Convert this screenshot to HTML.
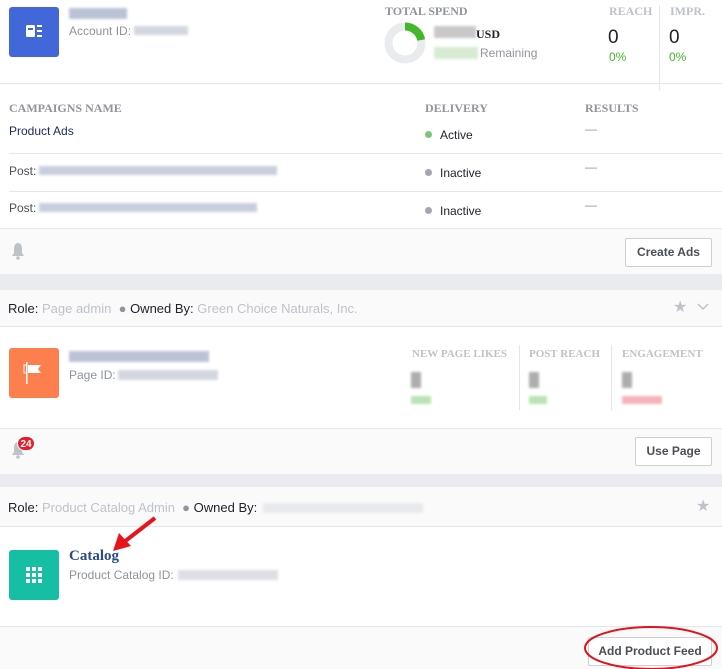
<!DOCTYPE html>
<html><head><meta charset="utf-8"><style>
*{margin:0;padding:0;box-sizing:border-box}
body{width:722px;height:669px;position:relative;background:#fff;font-family:"Liberation Sans",sans-serif;overflow:hidden;color:#4b4f56}
.a{position:absolute;white-space:nowrap}
.serif{font-family:"Liberation Serif",serif;font-weight:bold;font-size:12px;color:#90949c}
.line{position:absolute;height:1px;background:#e5e6e9}
.blur{position:absolute;background:#c9cdd8;filter:blur(1.2px);opacity:.8}
.btn{position:absolute;border:1px solid #ccd0d5;border-radius:2px;background:#fff;font-size:12px;font-weight:bold;color:#4b4f56;text-align:center;line-height:27px}
.dot{display:inline-block;width:7px;height:7px;border-radius:50%;margin-right:8px;vertical-align:1px}
.sm{font-size:12px}
.g{color:#90949c}
</style></head><body>
<!-- card 1 top -->
<div class="a" style="left:9px;top:7px;width:50px;height:50px;background:#4267d9;border-radius:3px">
<svg width="50" height="50"><rect x="17" y="18" width="9" height="12" rx="1.5" fill="#fff"/><rect x="19" y="21" width="5" height="2" fill="#4267d9"/><rect x="28" y="18" width="5" height="2" fill="#fff"/><rect x="28" y="23" width="5" height="2" fill="#fff"/><rect x="28" y="28" width="5" height="2" fill="#fff"/></svg></div>
<div class="blur" style="left:69px;top:8px;width:58px;height:11px;background:#aab4cc"></div>
<div class="a sm g" style="left:69px;top:24px;font-size:12px;color:#8d949e">Account ID:</div>
<div class="blur" style="left:134px;top:26px;width:54px;height:9px"></div>
<div class="a serif" style="left:385px;top:4px">TOTAL SPEND</div>
<svg class="a" style="left:384px;top:22px" width="42" height="42"><circle cx="21" cy="21" r="16.5" fill="none" stroke="#e9ebee" stroke-width="8"/><path d="M21 4.5 A16.5 16.5 0 0 1 37.2 18" fill="none" stroke="#42b72a" stroke-width="8"/></svg>
<div class="blur" style="left:434px;top:26px;width:42px;height:12px;background:#bbb"></div>
<div class="a" style="left:476px;top:27px;font-family:'Liberation Serif',serif;font-weight:bold;font-size:12px;color:#1d2129">USD</div>
<div class="blur" style="left:434px;top:47px;width:44px;height:12px;background:#cfe8c8"></div>
<div class="a" style="left:480px;top:46px;font-size:12px;color:#90949c">Remaining</div>
<div class="a serif" style="left:609px;top:4px;color:#bec3c9">REACH</div>
<div class="a serif" style="left:670px;top:4px;color:#bec3c9">IMPR.</div>
<div class="a" style="left:608px;top:27px;font-size:19px;color:#1d2129">0</div>
<div class="a" style="left:669px;top:27px;font-size:19px;color:#1d2129">0</div>
<div class="a" style="left:609px;top:50px;font-size:12px;color:#42b72a">0%</div>
<div class="a" style="left:669px;top:50px;font-size:12px;color:#42b72a">0%</div>
<div class="a" style="left:659px;top:5px;width:1px;height:85px;background:#e5e6e9"></div>
<div class="line" style="left:0;top:114px;width:722px;top:114px;display:none"></div>
<div class="line" style="left:0;top:114px"></div>
<div class="line" style="left:0;top:83px;width:722px"></div>
<!-- campaigns -->
<div class="a serif" style="left:9px;top:101px">CAMPAIGNS NAME</div>
<div class="a serif" style="left:425px;top:101px">DELIVERY</div>
<div class="a serif" style="left:585px;top:101px">RESULTS</div>
<div class="a sm" style="left:9px;top:124px;color:#1c2a5c">Product Ads</div>
<div class="a sm" style="left:425px;top:128px;color:#1d2129"><span class="dot" style="background:#7ac776"></span>Active</div>
<div class="a sm" style="left:585px;top:122px;color:#90949c">—</div>
<div class="line" style="left:9px;top:153px;width:713px"></div>
<div class="a sm" style="left:9px;top:164px;color:#4b4f56">Post:</div>
<div class="blur" style="left:39px;top:166px;width:238px;height:9px;background:#bcc3d6"></div>
<div class="a sm" style="left:425px;top:166px;color:#1d2129"><span class="dot" style="background:#a2a6b0"></span>Inactive</div>
<div class="a sm" style="left:585px;top:160px;color:#90949c">—</div>
<div class="line" style="left:9px;top:191px;width:713px"></div>
<div class="a sm" style="left:9px;top:201px;color:#4b4f56">Post:</div>
<div class="blur" style="left:39px;top:203px;width:218px;height:9px;background:#bcc3d6"></div>
<div class="a sm" style="left:425px;top:204px;color:#1d2129"><span class="dot" style="background:#a2a6b0"></span>Inactive</div>
<div class="a sm" style="left:585px;top:198px;color:#90949c">—</div>
<div class="a" style="left:0;top:228px;width:722px;height:46px;background:#fafafa;border-top:1px solid #e5e6e9"></div>
<svg class="a" style="left:10px;top:242px" width="16" height="18"><path d="M8 1C5 1 4 4 4 7v4L2 14h12l-2-3V7c0-3-1-6-4-6z" fill="#bec2c9"/><circle cx="8" cy="16" r="1.8" fill="#bec2c9"/></svg>
<div class="btn" style="left:625px;top:238px;width:87px;height:29px">Create Ads</div>
<div class="a" style="left:0;top:274px;width:722px;height:16px;background:#e9ebee"></div>
<!-- card 2 -->
<div class="a" style="left:0;top:290px;width:722px;height:37px;background:#fafafa;border-bottom:1px solid #e5e6e9"></div>
<div class="a" style="left:8px;top:301px;font-size:13px;color:#1d2129">Role: <span style="color:#bec3c9">Page admin</span> &nbsp;<span style="color:#90949c">●</span> Owned By: <span style="color:#bec3c9">Green Choice Naturals, Inc.</span></div>
<div class="a" style="left:673px;top:297px;font-size:16px;color:#bec3c9">★</div>
<svg class="a" style="left:697px;top:303px" width="12" height="8"><path d="M1 1l5 5 5-5" fill="none" stroke="#bec3c9" stroke-width="1.5"/></svg>
<div class="a" style="left:9px;top:348px;width:50px;height:50px;background:#fe7f4e;border-radius:3px">
<svg width="50" height="50"><rect x="17" y="14" width="1.5" height="22" fill="#fff"/><path d="M19 17h13l-3 4 3 4H19z" fill="#fff"/><rect x="15" y="17" width="3" height="8" fill="none" stroke="#fff" stroke-width="1"/></svg></div>
<div class="blur" style="left:69px;top:351px;width:140px;height:11px;background:#aab4cc"></div>
<div class="a sm" style="left:69px;top:368px;color:#8d949e">Page ID:</div>
<div class="blur" style="left:118px;top:370px;width:100px;height:10px"></div>
<div class="a serif" style="left:412px;top:348px;color:#bec3c9;font-size:11px">NEW PAGE LIKES</div>
<div class="a serif" style="left:529px;top:348px;color:#bec3c9;font-size:11px">POST REACH</div>
<div class="a serif" style="left:622px;top:348px;color:#bec3c9;font-size:11px">ENGAGEMENT</div>
<div class="a" style="left:519px;top:345px;width:1px;height:65px;background:#e5e6e9"></div>
<div class="a" style="left:611px;top:345px;width:1px;height:65px;background:#e5e6e9"></div>
<div class="blur" style="left:411px;top:372px;width:10px;height:16px;background:#999"></div>
<div class="blur" style="left:411px;top:396px;width:20px;height:8px;background:#a9dca0"></div>
<div class="blur" style="left:529px;top:372px;width:10px;height:16px;background:#999"></div>
<div class="blur" style="left:529px;top:396px;width:18px;height:8px;background:#a9dca0"></div>
<div class="blur" style="left:622px;top:372px;width:10px;height:16px;background:#999"></div>
<div class="blur" style="left:622px;top:396px;width:40px;height:8px;background:#f3a0a8"></div>
<div class="a" style="left:0;top:428px;width:722px;height:46px;background:#fafafa;border-top:1px solid #e5e6e9"></div>
<svg class="a" style="left:10px;top:441px" width="16" height="18"><path d="M8 1C5 1 4 4 4 7v4L2 14h12l-2-3V7c0-3-1-6-4-6z" fill="#bec2c9"/><circle cx="8" cy="16" r="1.8" fill="#bec2c9"/></svg>
<div class="a" style="left:17px;top:436px;width:18px;height:15px;border-radius:8px;background:#e41e2b;color:#fff;font-size:10px;font-weight:bold;text-align:center;line-height:15px;border:1px solid #fff">24</div>
<div class="btn" style="left:635px;top:437px;width:77px;height:29px">Use Page</div>
<div class="a" style="left:0;top:474px;width:722px;height:13px;background:#e9ebee"></div>
<!-- card 3 -->
<div class="a" style="left:0;top:487px;width:722px;height:40px;background:#fafafa;border-bottom:1px solid #e5e6e9"></div>
<div class="a" style="left:8px;top:500px;font-size:13px;color:#1d2129">Role: <span style="color:#bec3c9">Product Catalog Admin</span> &nbsp;<span style="color:#90949c">●</span> Owned By:</div>
<div class="blur" style="left:263px;top:503px;width:160px;height:10px;background:#e4e6ea"></div>
<div class="a" style="left:696px;top:496px;font-size:16px;color:#bec3c9">★</div>
<div class="a" style="left:9px;top:550px;width:50px;height:50px;background:#16bfa4;border-radius:3px">
<svg width="50" height="50"><g fill="#fff"><rect x="17" y="17" width="4" height="4"/><rect x="23" y="17" width="4" height="4"/><rect x="29" y="17" width="4" height="4"/><rect x="17" y="23" width="4" height="4"/><rect x="23" y="23" width="4" height="4"/><rect x="29" y="23" width="4" height="4"/><rect x="17" y="29" width="4" height="4"/><rect x="23" y="29" width="4" height="4"/><rect x="29" y="29" width="4" height="4"/></g></svg></div>
<div class="a" style="left:69px;top:548px;font-family:'Liberation Serif',serif;font-weight:bold;font-size:15px;color:#2a4a8b">Catalog</div>
<div class="a sm" style="left:69px;top:568px;color:#8d949e">Product Catalog ID:</div>
<div class="blur" style="left:178px;top:570px;width:100px;height:10px;background:#d5d8de"></div>
<div class="a" style="left:0;top:626px;width:722px;height:43px;background:#fafafa;border-top:1px solid #e5e6e9"></div>
<div class="btn" style="left:588px;top:637px;width:124px;height:29px">Add Product Feed</div>
<svg class="a" style="left:0;top:0" width="722" height="669">
<ellipse cx="651" cy="648" rx="66" ry="21" fill="none" stroke="#e0141e" stroke-width="2"/>
<line x1="155" y1="518" x2="124" y2="542" stroke="#e8141c" stroke-width="4"/>
<path d="M113 551 L119 533 L131 546 Z" fill="#e8141c"/>
</svg>
</body></html>
